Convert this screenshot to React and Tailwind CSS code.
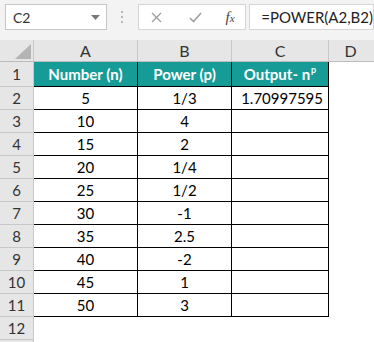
import React from "react";

const rows = [
  ["5", "1/3", "1.70997595"],
  ["10", "4", ""],
  ["15", "2", ""],
  ["20", "1/4", ""],
  ["25", "1/2", ""],
  ["30", "-1", ""],
  ["35", "2.5", ""],
  ["40", "-2", ""],
  ["45", "1", ""],
  ["50", "3", ""],
];

function RowHead({ n, h = "h-[23px]" }) {
  return (
    <div className={`w-[34px] ${h} shrink-0 bg-[#e6e6e6] border-r border-b border-[#c8c8c8] flex items-center justify-center text-[15px] text-[#333]`}>
      {n}
    </div>
  );
}

export default function App() {
  return (
    <div className="w-[374px] h-[342px] overflow-hidden bg-white relative" style={{ fontFamily: "Lato, 'Open Sans', sans-serif" }}>
      {/* formula bar */}
      <div className="h-[40px] bg-[#f3f3f3] flex items-start pt-[4px]">
        <div className="ml-[5px] w-[102px] h-[26px] bg-white border border-[#c6c6c6] flex items-center pl-[7px] pr-[6px]">
          <span className="text-[14px] text-[#333] flex-1">C2</span>
          <svg width="9" height="5" viewBox="0 0 9 5"><path d="M0 0 L9 0 L4.5 5 Z" fill="#7a7a7a" /></svg>
        </div>
        <div className="w-[31px] h-[26px] flex flex-col items-center justify-center gap-[3px]">
          <div className="w-[2px] h-[2px] bg-[#b8b8b8]" />
          <div className="w-[2px] h-[2px] bg-[#b8b8b8]" />
          <div className="w-[2px] h-[2px] bg-[#b8b8b8]" />
        </div>
        <div className="w-[109px] h-[26px] bg-white border border-[#d6d6d6] flex items-center">
          <svg className="ml-[12px]" width="11" height="11" viewBox="0 0 11 11">
            <path d="M1 1 L10 10 M10 1 L1 10" stroke="#9a9a9a" strokeWidth="1.2" />
          </svg>
          <svg className="ml-[27px]" width="13" height="11" viewBox="0 0 13 11">
            <path d="M1 6 L4.5 9.5 L12 1" stroke="#a0a0a0" strokeWidth="1.6" fill="none" />
          </svg>
          <span className="ml-[24px] text-[15px] italic text-[#444]" style={{ fontFamily: "'Liberation Serif', serif" }}>
            f<span className="text-[11px]">x</span>
          </span>
        </div>
        <div className="ml-[3px] flex-1 h-[26px] bg-white border border-[#d6d6d6] flex items-center pl-[11px] text-[15px] text-[#222]">
          =POWER(A2,B2)
        </div>
      </div>

      {/* column headers */}
      <div className="flex h-[22px] bg-[#e6e6e6] border-b border-[#bcbcbc] text-[16px] text-[#333]">
        <div className="w-[34px] shrink-0 border-r border-[#c8c8c8] flex items-end justify-end pr-[2px] pb-[2px]">
          <svg width="16" height="15" viewBox="0 0 16 15"><path d="M16 0 L16 15 L0 15 Z" fill="#b4b4b4" /></svg>
        </div>
        <div className="w-[104px] shrink-0 border-r border-[#c8c8c8] flex items-center justify-center">A</div>
        <div className="w-[94px] shrink-0 border-r border-[#c8c8c8] flex items-center justify-center">B</div>
        <div className="w-[97px] shrink-0 border-r border-[#c8c8c8] flex items-center justify-center">C</div>
        <div className="flex-1 flex items-center justify-center pr-[2px]">D</div>
      </div>

      {/* header row */}
      <div className="flex">
        <RowHead n="1" h="h-[25px]" />
        <div className="w-[104px] h-[25px] shrink-0 bg-[#169b97] border-r border-b border-black flex items-center justify-center text-white font-bold text-[15px]">Number (n)</div>
        <div className="w-[94px] h-[25px] shrink-0 bg-[#169b97] border-r border-b border-black flex items-center justify-center text-white font-bold text-[15px]">Power (p)</div>
        <div className="w-[97px] h-[25px] shrink-0 bg-[#169b97] border-r border-b border-black flex items-center justify-center text-white font-bold text-[15px]">
          <span className="whitespace-nowrap">
            Output- n<span className="text-[9px] relative -top-[7px] ml-[1px]">p</span>
          </span>
        </div>
      </div>

      {rows.map((r, i) => (
        <div key={i} className="flex">
          <RowHead n={String(i + 2)} />
          <div className="w-[104px] h-[23px] shrink-0 border-r border-b border-black flex items-center justify-center text-[15px] text-black">{r[0]}</div>
          <div className="w-[94px] h-[23px] shrink-0 border-r border-b border-black flex items-center justify-center text-[15px] text-black">{r[1]}</div>
          <div className="w-[97px] h-[23px] shrink-0 border-r border-b border-black flex items-center justify-end pr-[5px] text-[15px] text-black">{r[2]}</div>
        </div>
      ))}
      <div className="flex">
        <RowHead n="12" />
      </div>
      <div className="flex">
        <RowHead n="" />
      </div>
    </div>
  );
}
